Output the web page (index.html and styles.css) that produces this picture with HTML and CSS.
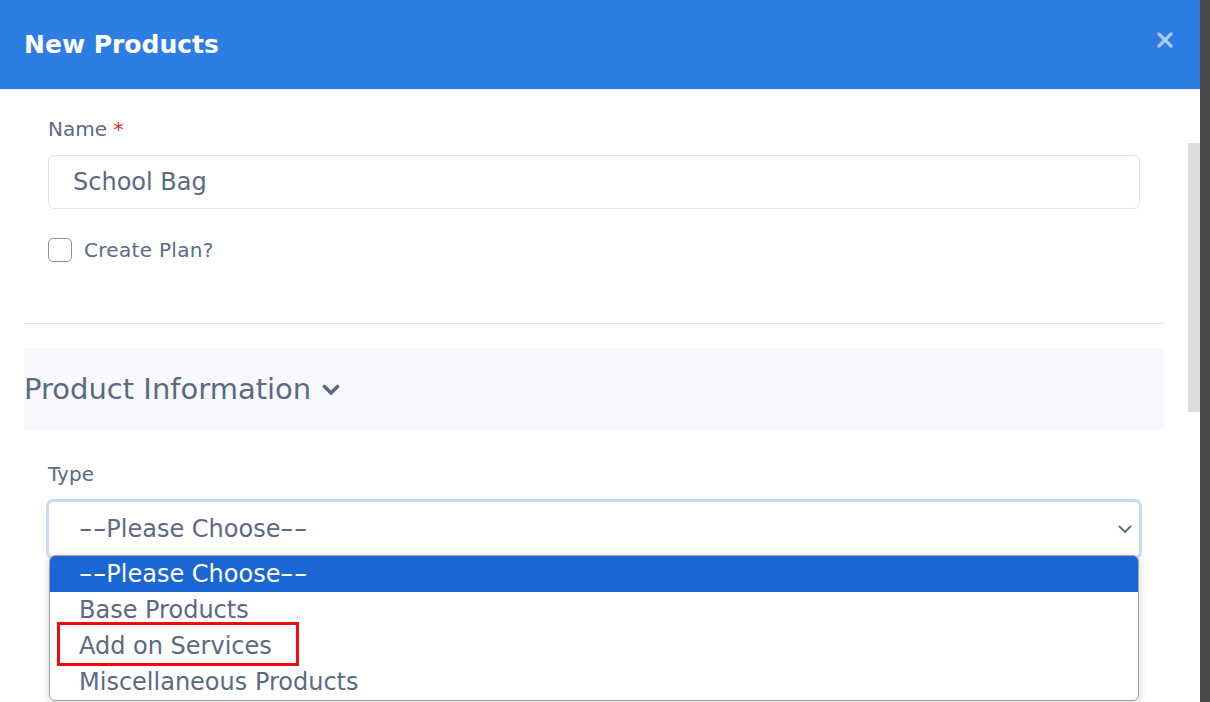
FILE: index.html
```html
<!DOCTYPE html>
<html>
<head>
<meta charset="utf-8">
<link rel="stylesheet" href="styles.css">
</head>
<body>
<div class="screen">
  <div class="modal">
    <div class="modal-header">
      <h1 class="title">New Products</h1>
      <span class="close">
        <svg width="16" height="16" viewBox="0 0 16 16"><path d="M2 2 L14 14 M14 2 L2 14" stroke="#a8c8f4" stroke-width="3.2" stroke-linecap="round"/></svg>
      </span>
    </div>
    <div class="modal-body">
      <div class="content">
        <div class="field-block">
          <label class="label">Name <span class="req">*</span></label>
          <div class="input">School Bag</div>
          <div class="check-row">
            <span class="checkbox"></span>
            <span class="check-label">Create Plan?</span>
          </div>
        </div>
        <hr class="divider">
        <div class="section-head">
          <span class="section-title">Product Information</span>
          <svg class="chev" width="18" height="12" viewBox="0 0 18 12"><path d="M2.5 2.5 L9 9 L15.5 2.5" fill="none" stroke="#5a6a85" stroke-width="3.6" stroke-linecap="round" stroke-linejoin="round"/></svg>
        </div>
        <div class="field-block type-block">
          <label class="label">Type</label>
          <div class="select-wrap">
            <div class="select">
              <span><span class="dash">--</span>Please Choose<span class="dash">--</span></span>
              <svg class="select-chev" width="14" height="9" viewBox="0 0 14 9"><path d="M1.5 1.5 L7 7 L12.5 1.5" fill="none" stroke="#5a6a85" stroke-width="1.8" stroke-linecap="round" stroke-linejoin="round"/></svg>
            </div>
            <div class="dropdown">
              <div class="opt selected"><span class="dash">--</span>Please Choose<span class="dash">--</span></div>
              <div class="opt">Base Products</div>
              <div class="opt marked">Add on Services</div>
              <div class="opt">Miscellaneous Products</div>
            </div>
          </div>
        </div>
      </div>
      <div class="scrollbar"></div>
    </div>
  </div>
  <div class="backdrop"></div>
</div>
</body>
</html>
```
FILE: styles.css
```css
*, *::before, *::after { box-sizing: border-box; }
html, body { margin: 0; padding: 0; }
body {
  width: 1210px;
  height: 702px;
  overflow: hidden;
  font-family: "DejaVu Sans", "Open Sans", sans-serif;
  color: #5a6a85;
  background: #fff;
}
.screen {
  display: flex;
  height: 702px;
}
.modal {
  width: 1200px;
  height: 702px;
  background: #fff;
  display: flex;
  flex-direction: column;
}
.backdrop {
  width: 10px;
  background: #4a4a4a;
}
.modal-header {
  flex: 0 0 90px;
  background: #2d7de3;
  display: flex;
  align-items: center;
  justify-content: space-between;
  padding: 0 27px 0 24px;
  border-bottom: 1px solid #e8eef8;
}
.title {
  margin: 0;
  color: #fff;
  font-size: 25px;
  font-weight: 600;
}
.close {
  display: flex;
  margin-bottom: 10px;
}
.modal-body {
  flex: 1;
  display: flex;
  position: relative;
}
.content {
  width: 1164px;
  padding-left: 24px;
}
.field-block {
  padding: 26px 24px 0 24px;
}
.label {
  display: block;
  font-size: 20px;
  font-weight: 400;
  line-height: 26px;
  color: #5a6a85;
}
.req { color: #e5252a; }
.input {
  margin-top: 13px;
  height: 54px;
  border: 1px solid #e0e3eb;
  border-radius: 6px;
  padding: 0 24px;
  font-size: 24px;
  line-height: 52px;
  color: #5a6a85;
}
.check-row {
  display: flex;
  align-items: center;
  gap: 12px;
  margin-top: 29px;
}
.checkbox {
  width: 24px;
  height: 24px;
  border: 1.5px solid #8391a8;
  border-radius: 5px;
}
.check-label {
  font-size: 20px;
  font-weight: 400;
  letter-spacing: 0.3px;
  line-height: 24px;
}
.divider {
  margin: 61px 0 0 0;
  border: none;
  border-top: 1px solid #e3e3e3;
}
.section-head {
  margin-top: 24px;
  height: 82px;
  background: #f8f9fd;
  display: flex;
  align-items: center;
  gap: 11px;
}
.section-title {
  font-size: 29px;
  font-weight: 400;
}
.chev { margin-top: 2px; }
.type-block { padding-top: 31px; }
.select-wrap {
  position: relative;
  margin-top: 12px;
}
.select {
  height: 60px;
  margin: 0 -2px;
  border: 3px solid #c9dcf5;
  border-radius: 7px;
  display: flex;
  align-items: center;
  justify-content: space-between;
  padding: 0 7px 0 30px;
  font-size: 24px;
  background: #fff;
}
.dash {
  display: inline-block;
  transform: scaleX(1.6);
  margin: 0 5px;
}
.dropdown {
  position: absolute;
  left: 1px;
  right: 1px;
  top: 56px;
  height: 146px;
  background: #fff;
  border: 1px solid #a2a2a2;
  border-radius: 6px;
  box-shadow: 0 2px 8px rgba(0,0,0,0.18);
  overflow: hidden;
}
.opt {
  height: 36px;
  line-height: 36px;
  padding-left: 29px;
  font-size: 24px;
  color: #5a6a85;
}
.opt.selected {
  background: #1a66d2;
  color: #fff;
}
.opt.marked { position: relative; }
.opt.marked::after {
  content: "";
  position: absolute;
  left: 7px;
  top: -6px;
  width: 242px;
  height: 44px;
  border: 3px solid #f00c0c;
}
.scrollbar {
  position: absolute;
  left: 1188px;
  top: 53px;
  width: 12px;
  height: 269px;
  background: #dcdcdc;
}
```
